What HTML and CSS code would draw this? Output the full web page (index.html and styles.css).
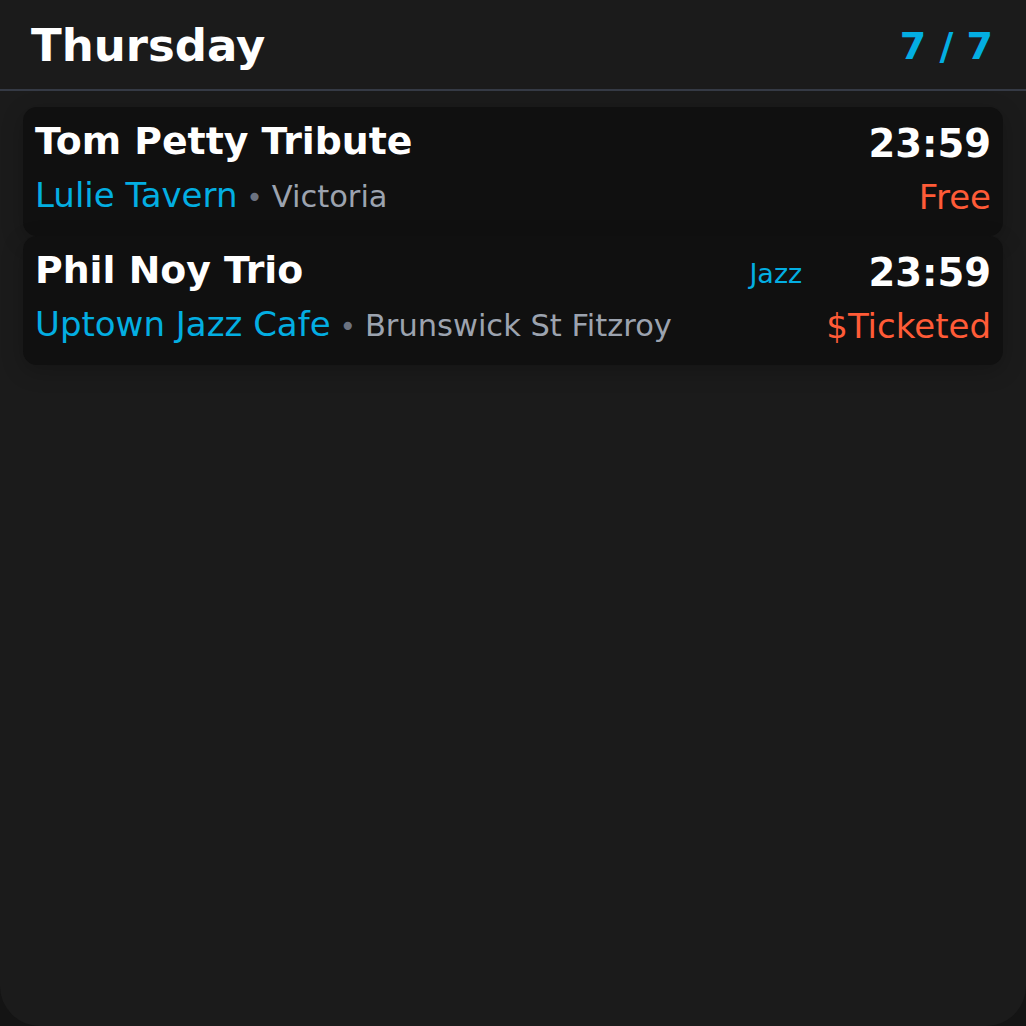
FILE: index.html
```html
<!DOCTYPE html>
<html lang="en">
<head>
<meta charset="utf-8">
<title>Thursday</title>
<link rel="stylesheet" href="styles.css">
</head>
<body>
<main class="panel">
  <header class="header">
    <h1 class="day">Thursday</h1>
    <div class="count">7 / 7</div>
  </header>
  <section class="list">
    <article class="card">
      <div class="main">
        <div class="row1">
          <span class="title">Tom Petty Tribute</span>
        </div>
        <div class="row2">
          <span class="venue">Lulie Tavern</span><span class="sep"> • </span><span class="area">Victoria</span>
        </div>
      </div>
      <div class="side">
        <span class="time">23:59</span>
        <span class="price">Free</span>
      </div>
    </article>
    <article class="card">
      <div class="main">
        <div class="row1">
          <span class="title">Phil Noy Trio</span>
          <span class="tag">Jazz</span>
        </div>
        <div class="row2">
          <span class="venue">Uptown Jazz Cafe</span><span class="sep"> • </span><span class="area">Brunswick St Fitzroy</span>
        </div>
      </div>
      <div class="side">
        <span class="time">23:59</span>
        <span class="price">$Ticketed</span>
      </div>
    </article>
  </section>
</main>
</body>
</html>
```

FILE: styles.css
```css
html, body {
  margin: 0;
  padding: 0;
  background: #141414;
}
body {
  font-family: "DejaVu Sans", "Noto Sans", sans-serif;
  color: #ffffff;
}
.panel {
  height: 1026px;
  box-sizing: border-box;
  background: #1b1b1b;
  border-radius: 0 0 40px 40px;
  overflow: hidden;
}
.header {
  display: flex;
  align-items: center;
  justify-content: space-between;
  padding: 20px 33px 17px 31px;
  border-bottom: 2px solid #353a45;
}
.day {
  margin: 0;
  font-size: 45px;
  font-weight: bold;
  line-height: 52px;
  color: #ffffff;
}
.count {
  font-size: 38px;
  font-weight: bold;
  line-height: 44px;
  color: #03aee2;
}
.list {
  display: flex;
  flex-direction: column;
  gap: 0;
  padding: 16px 23px 0;
}
.card {
  display: flex;
  background: #101010;
  border-radius: 14px;
  padding: 12px 12px 21px;
  box-shadow: 0 6px 22px rgba(0, 0, 0, 0.22);
}
.main {
  flex: 1;
  display: flex;
  flex-direction: column;
  gap: 12px;
}
.row1 {
  display: flex;
  align-items: baseline;
  justify-content: space-between;
  height: 44px;
}
.title {
  font-size: 37.8px;
  font-weight: bold;
  line-height: 44px;
}
.tag {
  font-size: 27px;
  line-height: 30px;
  color: #03aee2;
}
.row2 {
  font-size: 34px;
  line-height: 40px;
  height: 40px;
  white-space: nowrap;
}
.venue {
  color: #03aee2;
}
.sep {
  font-size: 28px;
  line-height: 30px;
  color: #6b7280;
}
.area {
  font-size: 30.5px;
  line-height: 30px;
  color: #9ca3af;
}
.side {
  display: flex;
  flex-direction: column;
  align-items: flex-end;
  gap: 14px;
  margin-left: 24px;
  padding-top: 3px;
}
.time {
  font-size: 38.5px;
  font-weight: bold;
  line-height: 44px;
}
.price {
  font-size: 34px;
  line-height: 34px;
  color: #ff5b37;
}
```
